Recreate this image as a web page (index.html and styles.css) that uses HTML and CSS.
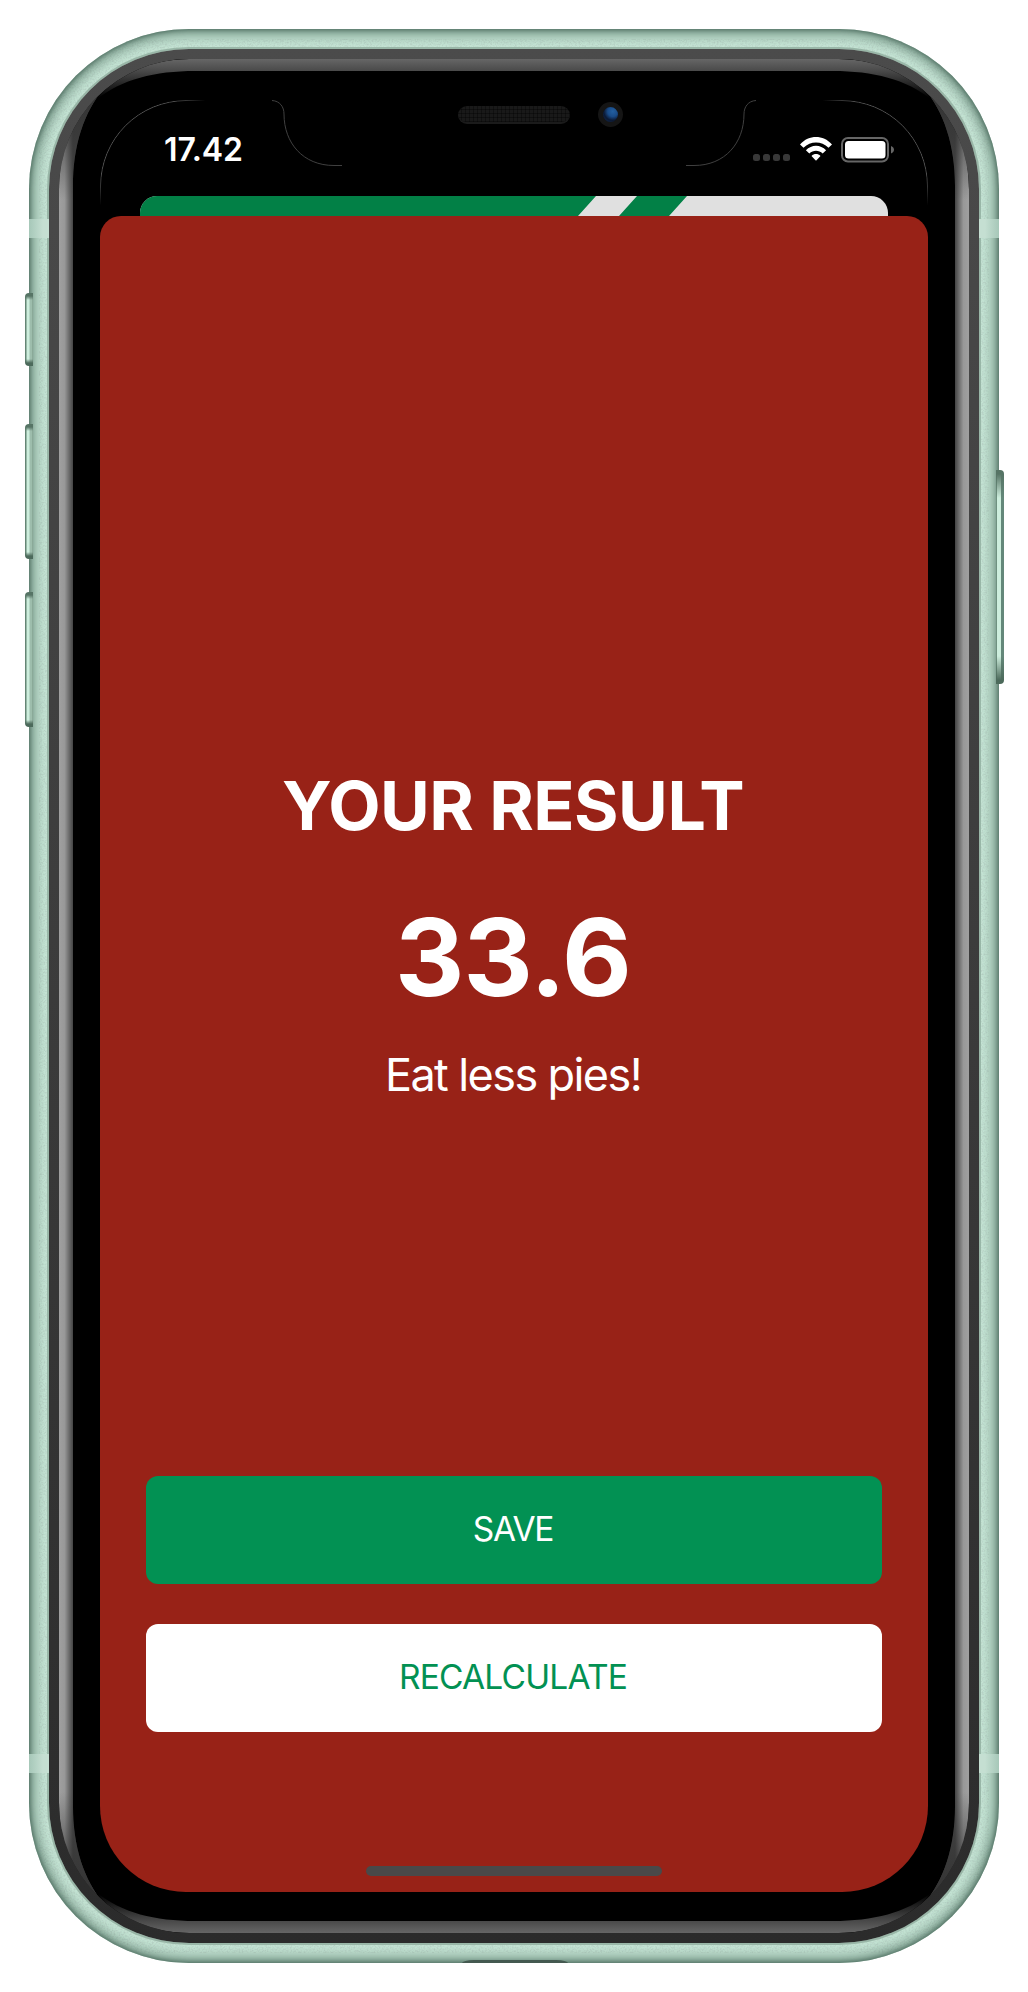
FILE: index.html
```html
<!DOCTYPE html>
<html lang="en">
<head>
<meta charset="utf-8">
<title>BMI Result</title>
<link rel="stylesheet" href="styles.css">
</head>
<body>
<div class="phone">
  <i class="key key-mute"></i>
  <i class="key key-up"></i>
  <i class="key key-down"></i>
  <i class="key key-power"></i>
  <div class="shell">
    <svg class="grain" width="970" height="1934" viewBox="0 0 970 1934">
      <filter id="grain" x="0" y="0" width="100%" height="100%">
        <feTurbulence type="fractalNoise" baseFrequency="0.6" numOctaves="2" seed="4"/>
        <feColorMatrix values="0 0 0 0 0.45  0 0 0 0 0.6  0 0 0 0 0.53  0 1.6 0 0 -0.62"/>
        <feComposite in2="SourceGraphic" operator="in"/>
      </filter>
      <rect x="10" y="10" width="950" height="1914" rx="150" fill="none" stroke="#000" stroke-width="18" filter="url(#grain)"/>
    </svg>
    <i class="band band-top"></i>
    <i class="band band-bottom"></i>
    <i class="port"></i>
    <div class="rim">
      <div class="bezel">
        <svg class="bevel" width="910" height="1874" viewBox="59 59 910 1874">
          <defs>
            <linearGradient id="side" gradientUnits="userSpaceOnUse" x1="59" y1="0" x2="73" y2="0">
              <stop offset="0" stop-color="#a0a0a0"/><stop offset=".4" stop-color="#989898"/><stop offset="1" stop-color="#444"/>
            </linearGradient>
            <linearGradient id="shade" gradientUnits="userSpaceOnUse" x1="0" y1="90" x2="0" y2="200">
              <stop offset="0" stop-color="#333" stop-opacity="1"/><stop offset="1" stop-color="#333" stop-opacity="0"/>
            </linearGradient>
            <linearGradient id="cap" gradientUnits="userSpaceOnUse" x1="0" y1="59" x2="0" y2="98">
              <stop offset="0" stop-color="#666"/><stop offset=".31" stop-color="#494949"/><stop offset="1" stop-color="#000"/>
            </linearGradient>
            <g id="corner">
              <path d="M59 1000V190C59 145 73 118 104 88C84 112 73 145 73 186V1000Z" fill="url(#side)"/>
              <path d="M59 200V190C59 145 73 118 104 88C84 112 73 145 73 186V200Z" fill="url(#shade)"/>
              <path d="M516 59H190C150 59 116 74 96 100C122 79 155 71 195 71H516Z" fill="url(#cap)"/>
            </g>
          </defs>
          <use href="#corner"/>
          <use href="#corner" transform="matrix(-1 0 0 1 1028 0)"/>
          <use href="#corner" transform="matrix(1 0 0 -1 0 1992)"/>
          <use href="#corner" transform="matrix(-1 0 0 -1 1028 1992)"/>
        </svg>
        <div class="screen">
          <svg class="notch" width="828" height="110" viewBox="100 100 828 110">
            <defs>
              <linearGradient id="fade" gradientUnits="userSpaceOnUse" x1="100" y1="205" x2="205" y2="100">
                <stop offset="0" stop-color="#555" stop-opacity="0"/><stop offset=".15" stop-color="#555"/><stop offset=".85" stop-color="#555"/><stop offset="1" stop-color="#555" stop-opacity="0"/>
              </linearGradient>
              <g id="edge" fill="none">
                <path d="M100.5 205V186A85.5 85.500 0 0 1 186 100.5H205" stroke="url(#fade)"/>
                <path d="M272 100.5C280 101 284 107 284 114C284 143 303 165.500 334 165.500H342" stroke="#404040"/>
              </g>
            </defs>
            <use href="#edge"/>
            <use href="#edge" transform="matrix(-1 0 0 1 1028 0)"/>
          </svg>
          <i class="speaker"></i>
          <i class="camera"></i>
          <header class="status">
            <span class="time">17.42</span>
            <div class="icons">
              <span class="dots"><i></i><i></i><i></i><i></i></span>
              <svg width="32" height="24" viewBox="0 0 32 24" fill="#fff">
                <path d="M0 7.400C9 -2.400 23 -2.400 32 7.400L28.500 10.800C21.500 3.600 10.500 3.600 3.500 10.800Z"/>
                <path d="M5.900 13.200C11.600 7.200 20.400 7.200 26.100 13.200L22.700 16.600C18.900 12.900 13.100 12.900 9.300 16.600Z"/>
                <path d="M11.500 18.900C14 16.500 18 16.500 20.500 18.900L16 23.700Z"/>
              </svg>
              <svg width="54" height="26" viewBox="0 0 54 26">
                <rect x="1" y="1" width="46" height="23.500" rx="6" fill="none" stroke="#666" stroke-width="2"/>
                <rect x="4" y="4" width="40.500" height="17.500" rx="3.500" fill="#fff"/>
                <path d="M50 9C54 10.500 54 15 50 16.500Z" fill="#666"/>
              </svg>
            </div>
          </header>
          <div class="behind">
            <svg width="748" height="40" viewBox="140 196 748 40">
              <path d="M140 196H596L560 236H140ZM637 196H687L651 236H601Z" fill="#028046"/>
            </svg>
          </div>
          <main class="sheet">
            <section class="result">
              <h1>YOUR RESULT</h1>
              <p class="value">33.6</p>
              <p class="advice">Eat less pies!</p>
            </section>
            <nav class="actions">
              <button class="btn save">SAVE</button>
              <button class="btn again">RECALCULATE</button>
            </nav>
            <i class="home"></i>
          </main>
        </div>
      </div>
    </div>
  </div>
</div>
</body>
</html>
```
FILE: styles.css
```css
* { box-sizing: border-box; }
body { margin: 0; background: #fff; font-family: Inter, "Liberation Sans", sans-serif; color: #fff; }
i { display: block; }
h1, p { margin: 0; font-weight: 400; }

.phone { position: relative; width: 1028px; height: 1992px; padding: 29px; }
.shell {
  position: relative; width: 970px; height: 1934px; padding: 20px; border-radius: 160px; background: #c6e6d6;
}
.shell::after {
  content: ""; position: absolute; inset: 0; border-radius: 160px; pointer-events: none;
  box-shadow: inset 0 0 4px 1px rgba(66, 98, 84, .75), inset 0 0 13px 5px rgba(76, 108, 94, .75);
  clip-path: path(evenodd, "M0 0H970V1934H0ZM20 160V1774A140 140 0 0 0 160 1914H810A140 140 0 0 0 950 1774V160A140 140 0 0 0 810 20H160A140 140 0 0 0 20 160Z");
}
.grain { position: absolute; left: 0; top: 0; }
.rim { position: relative; height: 1894px; padding: 10px; border-radius: 140px; background: linear-gradient(#4b4b4b, #2b2b2b); box-shadow: 0 0 0 2px #9bb8a9; }
.bezel { position: relative; height: 1874px; padding: 41px; border-radius: 130px; background: #000; overflow: hidden; }
.bevel { position: absolute; left: 0; top: 0; }

.key {
  position: absolute; left: 25px; width: 8px; border-radius: 4px 0 0 4px; z-index: 1;
  background: linear-gradient(#567465 0 3px, rgba(86, 116, 101, 0) 7px calc(100% - 7px), #4c6a5b calc(100% - 3px)), linear-gradient(90deg, #648574 0 1px, #cdeedd 2px 4px, #9dbdac 5px 7px, #779684);
}
.key-mute { top: 293px; height: 73px; }
.key-up { top: 424px; height: 135px; }
.key-down { top: 592px; height: 135px; }
.key-power { left: 996px; top: 470px; height: 214px; transform: scaleX(-1); background: linear-gradient(#567465 0 4px, rgba(86, 116, 101, 0) 28px calc(100% - 28px), #4c6a5b calc(100% - 4px)), linear-gradient(90deg, #64887a 0 2.500px, #cdeedd 3px 6.500px, #6f9180 7px); }
.band { position: absolute; left: 0; width: 970px; height: 19px; z-index: 1; background: linear-gradient(90deg, #a6c7b8, #c5dfd2 14px 20px, transparent 20px calc(100% - 20px), #c5dfd2 calc(100% - 20px) calc(100% - 14px), #a6c7b8); }
.band-top { top: 190px; }
.band-bottom { top: 1725px; }
.port { position: absolute; left: 433px; top: 1931px; width: 106px; height: 3px; border-radius: 12px 12px 0 0 / 3px 3px 0 0; background: #445950; z-index: 1; }

.screen { position: relative; width: 828px; height: 1792px; border-radius: 86px; overflow: hidden; display: flex; flex-direction: column; background: #000; }
.notch { position: absolute; left: 0; top: 0; }
.speaker { position: absolute; left: 358px; top: 6px; width: 112px; height: 18px; border-radius: 9px; background: repeating-linear-gradient(90deg, transparent 0 3px, rgba(0, 0, 0, .35) 3px 4px), repeating-linear-gradient(#191919 0 3px, #101010 3px 4px); border-bottom: 2px solid #1b1b1b; }
.camera { position: absolute; left: 498px; top: 2px; width: 25px; height: 25px; border-radius: 50%; border: 5px solid #151515; background: radial-gradient(circle at 65% 30%, #235f9f 0, #194b88 35%, #0b1934 62%, #142e58 100%); }
.status { height: 96px; flex: none; display: flex; justify-content: space-between; padding: 30px 33px 0 64px; }
.time { font-size: 32px; line-height: 40px; font-weight: 600; letter-spacing: -.15px; }
.icons { display: flex; align-items: flex-start; padding-top: 7px; }
.dots { display: flex; gap: 3px; margin: 17px 10px 0 0; }
.dots i { width: 7px; height: 7px; border-radius: 2.500px; background: #383838; }
.icons svg + svg { margin-left: 9px; }
.behind { flex: none; height: 20px; margin: 0 40px; border-radius: 17px 17px 0 0; background: #e0e0e0; overflow: hidden; }
.sheet { flex: 1; display: flex; flex-direction: column; align-items: center; border-radius: 21px 21px 0 0; background: #982217; }
.result { flex: none; height: 1260px; padding: 549px 2px 0 0; text-align: center; white-space: nowrap; }
h1 { font-size: 68px; line-height: 80px; font-weight: 700; letter-spacing: -.5px; }
.value { margin-top: 50px; font-size: 107.5px; line-height: 124px; font-weight: 700; letter-spacing: -.8px; }
.advice { margin-top: 28px; font-size: 45px; line-height: 56px; letter-spacing: -1.6px; }
.actions { display: grid; gap: 40px; }
.btn { width: 736px; height: 108px; padding: 0 2px 2px 0; border: 0; border-radius: 12px; font: 400 33.5px/40px Inter, "Liberation Sans", sans-serif; letter-spacing: -.8px; }
.save { background: #029153; color: #fff; letter-spacing: -1.3px; }
.again { background: #fff; color: #029153; }
.home { width: 296px; height: 10px; margin-top: 134px; border-radius: 5px; background: #494949; }
```
